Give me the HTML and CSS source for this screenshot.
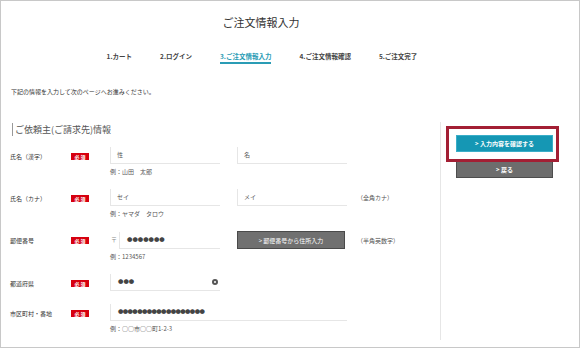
FILE: index.html
```html
<!DOCTYPE html>
<html lang="ja">
<head>
    <meta charset="UTF-8">
    <title>ご注文情報入力</title>
    <link rel="stylesheet" href="styles.css">
</head>
<body>
    <div class="page">
        <!-- Header -->
        <h1 class="page-title">ご注文情報入力</h1>
        <ul class="steps">
            <li>1.カート</li>
            <li>2.ログイン</li>
            <li class="active">3.ご注文情報入力</li>
            <li>4.ご注文情報確認</li>
            <li>5.ご注文完了</li>
        </ul>
        <p class="intro">下記の情報を入力して次のページへお進みください。</p>

        <div class="content">
            <!-- Form -->
            <div class="main">
                <h2 class="section-title">ご依頼主(ご請求先)情報</h2>

                <div class="form-row">
                    <div class="row-label"><span class="label-text">氏名（漢字）</span><span class="badge">必 須</span></div>
                    <div class="row-field">
                        <div class="field-line">
                            <div class="input half">性</div>
                            <div class="input half">名</div>
                        </div>
                        <p class="hint">例：山田　太郎</p>
                    </div>
                </div>

                <div class="form-row">
                    <div class="row-label"><span class="label-text">氏名（カナ）</span><span class="badge">必 須</span></div>
                    <div class="row-field">
                        <div class="field-line">
                            <div class="input half">セイ</div>
                            <div class="input half">メイ</div>
                            <span class="note">（全角カナ）</span>
                        </div>
                        <p class="hint">例：ヤマダ　タロウ</p>
                    </div>
                </div>

                <div class="form-row">
                    <div class="row-label"><span class="label-text">郵便番号</span><span class="badge">必 須</span></div>
                    <div class="row-field">
                        <div class="field-line">
                            <span class="zip-mark">〒</span>
                            <div class="input zip filled">●●●●●●●</div>
                            <button class="zip-btn">&gt; 郵便番号から住所入力</button>
                            <span class="note note-zip">（半角英数字）</span>
                        </div>
                        <p class="hint">例：1234567</p>
                    </div>
                </div>

                <div class="form-row">
                    <div class="row-label"><span class="label-text">都道府県</span><span class="badge">必 須</span></div>
                    <div class="row-field">
                        <div class="field-line">
                            <div class="input half filled select">●●●<span class="clear-icon"></span></div>
                        </div>
                    </div>
                </div>

                <div class="form-row">
                    <div class="row-label"><span class="label-text">市区町村・番地</span><span class="badge">必 須</span></div>
                    <div class="row-field">
                        <div class="field-line">
                            <div class="input wide filled address">●●●●●●●●●●●●●●●●●●</div>
                        </div>
                        <p class="hint">例：○○市○○町1-2-3</p>
                    </div>
                </div>
            </div>

            <!-- Side buttons -->
            <div class="sidebar">
                <button class="btn btn-confirm">&gt; 入力内容を確認する</button>
                <button class="btn btn-back">&gt; 戻る</button>
                <div class="highlight"></div>
            </div>
        </div>
    </div>
</body>
</html>
```

FILE: styles.css
```css
* {
    box-sizing: border-box;
    margin: 0;
    padding: 0;
}

body {
    width: 580px;
    height: 348px;
    background: #fff;
    color: #333;
    font-family: "Noto Sans CJK JP", "Noto Sans", sans-serif;
}

.page {
    width: 580px;
    height: 348px;
    border: 1px solid #c8c8c8;
    overflow: hidden;
}

/* Header */
.page-title {
    width: 520px;
    padding-top: 14px;
    text-align: center;
    font-size: 11px;
    line-height: 14px;
    font-weight: normal;
    color: #333;
}

.steps {
    width: 522px;
    margin-top: 23px;
    display: flex;
    justify-content: center;
    gap: 28px;
    list-style: none;
}

.steps li {
    font-size: 6.5px;
    line-height: 9px;
    font-weight: bold;
    color: #444;
    padding-bottom: 1px;
    border-bottom: 2px solid transparent;
}

.steps li.active {
    color: #2a9cb5;
    border-bottom-color: #2a9cb5;
}

.intro {
    margin-top: 24px;
    padding-left: 10px;
    font-size: 6px;
    line-height: 8px;
    color: #333;
}

/* Content area */
.content {
    margin-top: 26px;
    height: 218px;
    display: flex;
}

.main {
    width: 439px;
}

.section-title {
    margin: 1px 0 0 11px;
    padding-left: 2px;
    border-left: 1px solid #999;
    font-size: 9px;
    line-height: 13px;
    font-weight: normal;
    color: #555;
}

/* Form rows */
.form-row {
    display: flex;
    margin-bottom: 13px;
}

.form-row:first-of-type {
    margin-top: 11px;
}

.row-label {
    width: 109px;
    height: 17px;
    padding-left: 9px;
    display: flex;
    align-items: center;
    padding-top: 2px;
}

.label-text {
    width: 61px;
    font-size: 6px;
    color: #333;
}

.badge {
    width: 18px;
    height: 7px;
    background: #d6000f;
    color: #fff;
    font-size: 5px;
    line-height: 7px;
    font-weight: bold;
    text-align: center;
}

.field-line {
    display: flex;
    align-items: center;
}

.input {
    height: 17px;
    padding-left: 6px;
    background: #fff;
    border-left: 1px solid #e6e6e6;
    border-bottom: 1px solid #e6e6e6;
    font-size: 6px;
    line-height: 16px;
    color: #555;
}

.input.half {
    width: 110px;
}

.input.half + .input.half {
    margin-left: 17px;
}

.input.wide {
    width: 237px;
}

.input.filled {
    font-size: 5.4px;
    color: #444;
    padding-left: 7px;
}

.input.address {
    letter-spacing: -0.6px;
}

.input.zip {
    width: 101px;
}

.input.select {
    display: flex;
    align-items: center;
    justify-content: space-between;
    padding-right: 2px;
}

.clear-icon {
    width: 6px;
    height: 6px;
    border-radius: 50%;
    background: #555;
    display: flex;
    align-items: center;
    justify-content: center;
}

.clear-icon::after {
    content: "";
    width: 2px;
    height: 2px;
    border-radius: 50%;
    background: #fff;
}

.zip-mark {
    width: 9px;
    padding-left: 1px;
    font-size: 6px;
    color: #888;
    align-self: flex-start;
    margin-top: 4px;
}

.zip-btn {
    width: 108px;
    height: 18px;
    margin-left: 17px;
    background: #707070;
    border: 1px solid #4a4a4a;
    color: #fff;
    font-family: inherit;
    font-size: 6px;
}

.note {
    margin-left: 10px;
    font-size: 6px;
    color: #555;
}

.note-zip {
    margin-left: 12px;
}

.hint {
    margin-top: 4px;
    font-size: 6px;
    line-height: 8px;
    color: #555;
}

/* Sidebar */
.sidebar {
    position: relative;
    width: 138px;
    border-left: 1px solid #e6e6e6;
    padding: 13px 0 0 15px;
}

.btn {
    display: block;
    width: 97px;
    height: 17px;
    color: #fff;
    font-family: inherit;
    font-size: 6px;
    font-weight: bold;
    text-align: center;
}

.btn-confirm {
    background: #1597b4;
    border: 1px solid #3aaec8;
}

.btn-back {
    margin-top: 9px;
    background: #6d6d6d;
    border: 1px solid #4d4d4d;
}

.highlight {
    position: absolute;
    left: 5px;
    top: 4px;
    width: 113px;
    height: 36px;
    border: 3px solid #a31f34;
}
```
